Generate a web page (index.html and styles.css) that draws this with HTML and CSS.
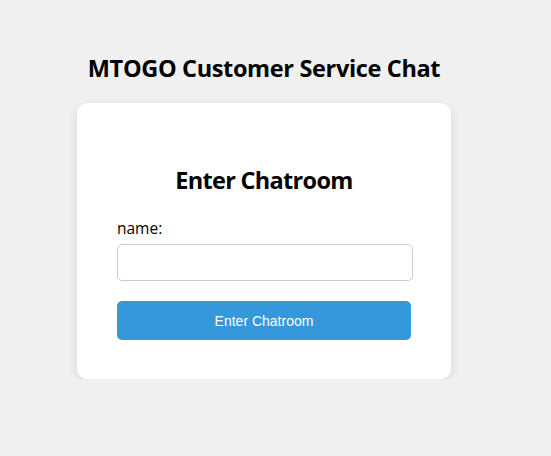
FILE: index.html
```html
<!DOCTYPE html>
<html lang="en">
<head>
<meta charset="utf-8">
<title>MTOGO Customer Service Chat</title>
<link rel="stylesheet" href="styles.css">
</head>
<body>
<div class="page">
  <h1 class="page-title">MTOGO Customer Service Chat</h1>
  <div class="card">
    <h2 class="card-title">Enter Chatroom</h2>
    <form class="join-form">
      <label class="field-label" for="name">name:</label>
      <input class="field-input" id="name" type="text">
      <button class="join-button" type="button">Enter Chatroom</button>
    </form>
  </div>
</div>
</body>
</html>
```
FILE: styles.css
```css
html, body {
  margin: 0;
  padding: 0;
}
body {
  background: #f0f0f0;
  font-family: "Open Sans", "Noto Sans", sans-serif;
  color: #000;
}
.page {
  width: 374px;
  margin-left: 77px;
  padding-top: 52px;
}
.page-title {
  margin: 0 0 18px;
  font-size: 23.5px;
  letter-spacing: -0.35px;
  line-height: 33px;
  font-weight: 700;
  text-align: center;
}
.card {
  background: #fff;
  border-radius: 10px;
  box-shadow: 0 3px 10px rgba(0, 0, 0, 0.1);
  padding: 61px 40px 39px;
}
.card-title {
  margin: 0 0 20px;
  font-size: 23.5px;
  letter-spacing: -0.7px;
  line-height: 33px;
  font-weight: 700;
  text-align: center;
}
.join-form {
  display: flex;
  flex-direction: column;
  align-items: flex-start;
}
.field-label {
  font-size: 15.5px;
  line-height: 22px;
  margin-bottom: 5px;
}
.field-input {
  box-sizing: border-box;
  width: 296px;
  height: 37px;
  border: 1px solid #ccc;
  border-radius: 5px;
  padding: 8px;
  font-size: 16px;
  margin: 0 0 20px;
}
.join-button {
  box-sizing: border-box;
  width: 294px;
  height: 39px;
  border: none;
  border-radius: 5px;
  background: #3498db;
  color: #fff;
  font-family: "Liberation Sans", Arial, sans-serif;
  font-size: 14px;
  cursor: pointer;
}
```
